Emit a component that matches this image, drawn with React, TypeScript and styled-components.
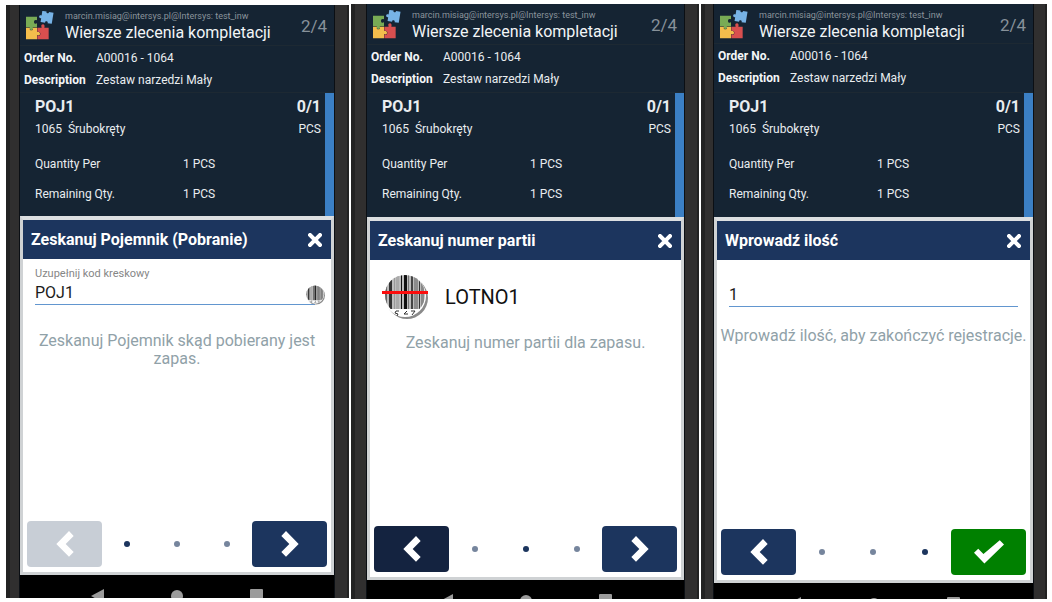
import React from "react";
import styled, { createGlobalStyle } from "styled-components";

const GlobalStyle = createGlobalStyle`
  *, *::before, *::after { box-sizing: border-box; }
  body { margin: 0; background: #ffffff; }
  body, button, input { font-family: Roboto, "Liberation Sans", sans-serif; }
`;

const Board = styled.main`
  display: grid;
  grid-template-columns: 343fr 348fr 346fr;
  gap: 2px;
  min-height: 100vh;
  padding: 4px 5px 3px 6px;
`;

const Phone = styled.section<{ $inset: number; $left: number; $right: number }>`
  display: flex;
  min-width: 0;
  margin: ${(p) => p.$inset}px 0;
  padding: 0 ${(p) => p.$right}px 0 ${(p) => p.$left}px;
  background: #302f2f;
  border: solid #222222;
  border-width: 0 2px 0 4px;
`;

const Screen = styled.div`
  flex: 1;
  min-width: 0;
  display: flex;
  flex-direction: column;
  background: #152433;
  color: #e9edf0;
  box-shadow: 0 0 0 1px #0b0f14;
  clip-path: inset(0 -1px);
`;

const AppBar = styled.header<{ $height: number }>`
  display: flex;
  align-items: flex-start;
  height: ${(p) => p.$height}px;
  padding: 6px 7px 0 6px;
  border-bottom: 1px solid #1d2933;
`;

const Titles = styled.div`
  flex: 1;
  min-width: 0;
  margin-left: 11px;
  white-space: nowrap;
`;

const Account = styled.div`
  font-size: 9px;
  line-height: 10px;
  color: #8b949c;
`;

const Title = styled.h1`
  margin: 2px 0 0;
  font-size: 16px;
  line-height: 20px;
  font-weight: 400;
  color: #f2f5f7;
`;

const Counter = styled.span`
  padding-top: 5px;
  font-size: 17px;
  line-height: 20px;
  color: #87919a;
`;

const OrderInfo = styled.dl<{ $height: number }>`
  display: grid;
  grid-template-columns: 72px 1fr;
  grid-auto-rows: 22px;
  align-items: center;
  height: ${(p) => p.$height}px;
  margin: 0;
  padding: 1px 4px;
  border-bottom: 1px solid #1d2933;
  font-size: 12px;
  dt { font-weight: 700; color: #f4f6f8; white-space: nowrap; }
  dd { margin: 0; }
`;

const LinePanel = styled.div<{ $height: number }>`
  height: ${(p) => p.$height}px;
  padding: 4px 4px 0 15px;
  border-right: 9px solid #3b7fc4;
  font-size: 12px;
`;

const LineRow = styled.div<{ $strong?: boolean }>`
  display: flex;
  justify-content: space-between;
  line-height: ${(p) => (p.$strong ? 20 : 24)}px;
  font-size: ${(p) => (p.$strong ? 16 : 12)}px;
  font-weight: ${(p) => (p.$strong ? 700 : 400)};
  white-space: pre;
`;

const Quantities = styled.dl`
  display: grid;
  grid-template-columns: 148px 1fr;
  grid-auto-rows: 30px;
  align-items: center;
  margin: 8px 0 0;
  dd { margin: 0; }
`;

const Dialog = styled.section`
  flex: 1;
  display: flex;
  flex-direction: column;
  background: #ffffff;
  border: 3px solid #cfd2d4;
  border-top: 4px solid #dcdfe1;
`;

const DialogHead = styled.header`
  display: flex;
  align-items: center;
  justify-content: space-between;
  height: 39px;
  padding: 0 9px 0 8px;
  background: #1c355e;
  color: #ffffff;
`;

const DialogTitle = styled.h2`
  margin: 0;
  font-size: 16px;
  line-height: 20px;
  font-weight: 700;
`;

const CloseButton = styled.button`
  display: flex;
  padding: 0;
  border: 0;
  background: none;
  color: inherit;
`;

const Field = styled.div<{ $top: number }>`
  display: flex;
  align-items: flex-end;
  margin: ${(p) => p.$top}px 6px 0 12px;
`;

const FieldMain = styled.div`
  flex: 1;
  min-width: 0;
`;

const FieldLabel = styled.label`
  display: block;
  font-size: 11px;
  line-height: 12px;
  color: #868686;
`;

const TextInput = styled.input`
  display: block;
  width: 100%;
  height: 25px;
  padding: 0;
  border: 0;
  border-bottom: 1px solid #6296cf;
  border-radius: 0;
  outline: 0;
  background: none;
  font-size: 16px;
  color: #1b1b1b;
`;

const FieldSpacer = styled.span`
  width: 6px;
`;

const FieldIcon = styled.button`
  display: flex;
  margin-left: -10px;
  padding: 0;
  border: 0;
  background: none;
`;

const Scan = styled.div`
  display: flex;
  align-items: center;
  gap: 17px;
  margin: 14px 12px 0;
  font-size: 20px;
  line-height: 24px;
  color: #111111;
`;

const Help = styled.p<{ $top: number }>`
  margin: ${(p) => p.$top}px 0 0;
  text-align: center;
  font-size: 16px;
  line-height: 18px;
  color: #90a1a8;
`;

const Pager = styled.footer`
  display: flex;
  align-items: center;
  margin-top: auto;
  padding: 0 4px 5px;
`;

const Dots = styled.div`
  flex: 1;
  display: flex;
  justify-content: space-around;
`;

const Dot = styled.span<{ $active: boolean }>`
  width: 6px;
  height: 6px;
  border-radius: 50%;
  background: ${(p) => (p.$active ? "#1c355e" : "#76859d")};
`;

type Tone = "disabled" | "navy" | "pressed" | "green";

const toneColors: Record<Tone, string> = {
  disabled: "#c8ced6",
  navy: "#1c355e",
  pressed: "#142340",
  green: "#008000",
};

const PagerButton = styled.button<{ $tone: Tone }>`
  display: flex;
  align-items: center;
  justify-content: center;
  width: 75px;
  height: 46px;
  padding: 0;
  border: 0;
  border-radius: 4px;
  background: ${(p) => toneColors[p.$tone]};
`;

const SystemBar = styled.nav<{ $height: number }>`
  display: flex;
  align-items: flex-start;
  justify-content: center;
  gap: 66px;
  height: ${(p) => p.$height}px;
  padding: 14px 0 0;
  overflow: hidden;
  background: #000000;
  svg { flex: none; }
`;

const Logo = () => (
  <svg width="28" height="29" viewBox="0 0 84 87" aria-hidden="true">
    <path d="M0 17h33v11c-6-3-9 0-9 5s4 7 9 4v12H20c3 5 0 8-4 8s-7-3-4-8H0z" fill="#78ab55" />
    <path d="M0 50h12c-2 6 0 8 4 8s6-3 4-8h13v13c6-3 9 1 9 5s-3 7-9 4v13H0z" fill="#f3bd4c" />
    <path d="M34 50h13c-3-7 0-10 4-10s6 4 4 10h13v35H34V73c7 3 9-1 9-5s-3-8-9-5z" fill="#d84f4f" />
    <path
      d="M46 2h13c-2 6 9 6 7 0h14v34H67c3-7-10-7-7 0H46V24c-8 3-10-10 0-8z"
      transform="rotate(9 62 20)"
      fill="#77b3e6"
    />
  </svg>
);

const bars: [number, number, string][] = [
  [3, 2, "#666"], [7, 3, "#333"], [12, 1, "#999"], [14, 3, "#aaa"],
  [19, 1, "#111"], [22, 3, "#111"], [26, 1, "#777"], [29, 2, "#444"],
  [32, 4, "#8c8c8c"], [37, 1, "#333"], [39, 3, "#888"],
];

const Barcode = ({ size, beam = false }: { size: number; beam?: boolean }) => {
  const id = beam ? "barcode-large" : "barcode-small";
  return (
    <svg width={size} height={size} viewBox="0 0 46 46" aria-hidden="true">
      <defs>
        <clipPath id={id}><circle cx="23" cy="21" r="20" /></clipPath>
      </defs>
      <circle cx="25" cy="24" r="21" fill="#8a8a8a" />
      <circle cx="23" cy="22" r="21" fill="#ffffff" />
      <g clipPath={`url(#${id})`}>
        <rect width="46" height="35" fill="#bdbdbd" />
        {bars.map(([x, w, fill]) => (
          <rect key={x} x={x} y="0" width={w} height="35" fill={fill} />
        ))}
      </g>
      <path d="M17 37h-3l-1 2 3 1-1 2M25 37l-3 3h4M29 37h4l-3 4" fill="none" stroke="#333" strokeWidth="1" />
      {beam && <rect y="17" width="46" height="3" fill="#fb0d0d" />}
    </svg>
  );
};

const Cross = () => (
  <svg width="14" height="14" viewBox="0 0 14 14" aria-hidden="true">
    <path d="M2 2l10 10M12 2L2 12" stroke="currentColor" strokeWidth="4" strokeLinecap="square" />
  </svg>
);

const Chevron = ({ next = false }: { next?: boolean }) => (
  <svg width="18" height="26" viewBox="0 0 54 78" aria-hidden="true">
    <path
      d={next ? "M15 0L53 39 15 77 1 63 25 39 1 15z" : "M39 0L1 39 39 77 53 63 29 39 53 15z"}
      fill="#ffffff"
    />
  </svg>
);

const Check = () => (
  <svg width="30" height="24" viewBox="0 0 92 72" aria-hidden="true">
    <path d="M0 38l13-12 16 16L79 0l13 13-60 58z" fill="#ffffff" />
  </svg>
);

interface PhoneProps {
  inset?: number;
  left: number;
  right: number;
  barHeight: number;
  infoHeight: number;
  lineHeight: number;
  navHeight: number;
  title: string;
  step: number;
  back: Tone;
  children: React.ReactNode;
}

const PickingPhone = (p: PhoneProps) => (
  <Phone $inset={p.inset ?? 0} $left={p.left} $right={p.right}>
    <Screen>
      <AppBar $height={p.barHeight}>
        <Logo />
        <Titles>
          <Account>marcin.misiag@intersys.pl@Intersys: test_inw</Account>
          <Title>Wiersze zlecenia kompletacji</Title>
        </Titles>
        <Counter>2/4</Counter>
      </AppBar>
      <OrderInfo $height={p.infoHeight}>
        <dt>Order No.</dt>
        <dd>A00016 - 1064</dd>
        <dt>Description</dt>
        <dd>Zestaw narzedzi Mały</dd>
      </OrderInfo>
      <LinePanel $height={p.lineHeight}>
        <LineRow $strong><span>POJ1</span><span>0/1</span></LineRow>
        <LineRow><span>{"1065  Śrubokręty"}</span><span>PCS</span></LineRow>
        <Quantities>
          <dt>Quantity Per</dt>
          <dd>1 PCS</dd>
          <dt>Remaining Qty.</dt>
          <dd>1 PCS</dd>
        </Quantities>
      </LinePanel>
      <Dialog>
        <DialogHead>
          <DialogTitle>{p.title}</DialogTitle>
          <CloseButton type="button" aria-label="Zamknij"><Cross /></CloseButton>
        </DialogHead>
        {p.children}
        <Pager>
          <PagerButton type="button" $tone={p.back} disabled={p.back === "disabled"} aria-label="Wstecz">
            <Chevron />
          </PagerButton>
          <Dots>
            {[0, 1, 2].map((i) => <Dot key={i} $active={i === p.step} />)}
          </Dots>
          <PagerButton type="button" $tone={p.step === 2 ? "green" : "navy"} aria-label={p.step === 2 ? "Zatwierdź" : "Dalej"}>
            {p.step === 2 ? <Check /> : <Chevron next />}
          </PagerButton>
        </Pager>
      </Dialog>
      <SystemBar $height={p.navHeight}>
        <svg width="13" height="14" aria-hidden="true"><path d="M13 0v14L0 7z" fill="#9b9b9b" /></svg>
        <svg width="14" height="14" aria-hidden="true"><circle cx="7" cy="7" r="6" fill="#9b9b9b" /></svg>
        <svg width="13" height="14" aria-hidden="true"><rect width="13" height="13" rx="1" fill="#9b9b9b" /></svg>
      </SystemBar>
    </Screen>
  </Phone>
);

export default function App() {
  return (
    <>
      <GlobalStyle />
      <Board>
        <PickingPhone
          inset={1} left={10} right={13} barHeight={41} infoHeight={47} lineHeight={123} navHeight={23}
          title="Zeskanuj Pojemnik (Pobranie)" step={0} back="disabled"
        >
          <Field $top={9}>
            <FieldMain>
              <FieldLabel htmlFor="barcode">Uzupełnij kod kreskowy</FieldLabel>
              <TextInput id="barcode" defaultValue="POJ1" />
            </FieldMain>
            <FieldIcon type="button" aria-label="Skanuj"><Barcode size={20} /></FieldIcon>
          </Field>
          <Help $top={27}>Zeskanuj Pojemnik skąd pobierany jest zapas.</Help>
        </PickingPhone>
        <PickingPhone
          left={12} right={13} barHeight={41} infoHeight={48} lineHeight={124} navHeight={19}
          title="Zeskanuj numer partii" step={1} back="pressed"
        >
          <Scan><Barcode size={46} beam /><span>LOTNO1</span></Scan>
          <Help $top={14}>Zeskanuj numer partii dla zapasu.</Help>
        </PickingPhone>
        <PickingPhone
          left={9} right={12} barHeight={40} infoHeight={49} lineHeight={124} navHeight={16}
          title="Wprowadź ilość" step={2} back="navy"
        >
          <Field $top={22}>
            <FieldMain>
              <TextInput aria-label="Ilość" defaultValue="1" />
            </FieldMain>
            <FieldSpacer />
          </Field>
          <Help $top={20}>Wprowadź ilość, aby zakończyć rejestracje.</Help>
        </PickingPhone>
      </Board>
    </>
  );
}
